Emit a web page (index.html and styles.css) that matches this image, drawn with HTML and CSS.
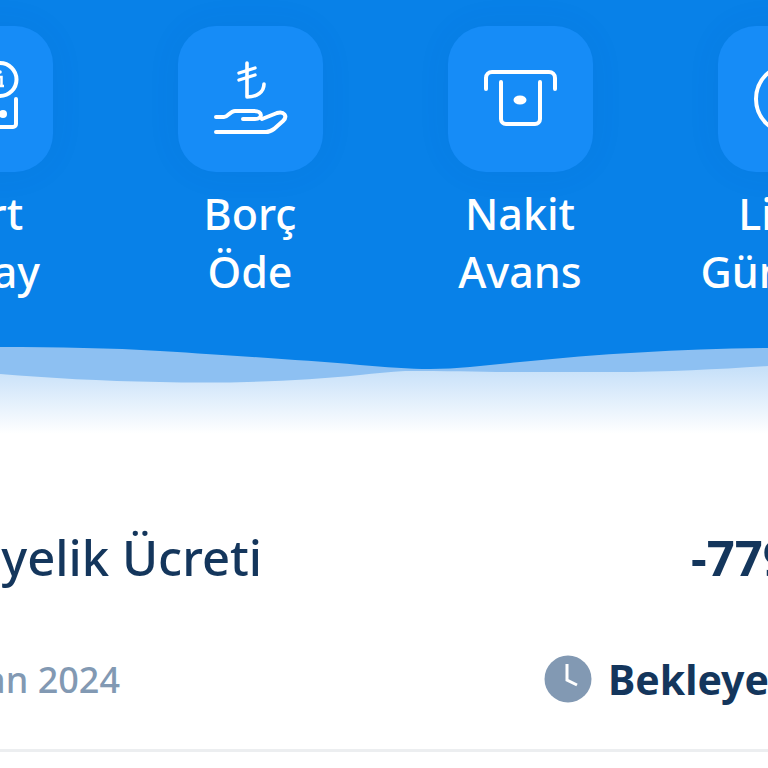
FILE: index.html
```html
<!DOCTYPE html>
<html lang="tr">
<head>
<meta charset="utf-8">
<title>Kart</title>
<link rel="stylesheet" href="styles.css">
</head>
<body>
<div class="screen">
  <section class="hero">
    <div class="actions">
      <div class="action">
        <div class="tile">
          <svg class="icon" viewBox="0 0 145 146"><g fill="none" stroke="#fff" stroke-width="4" stroke-linecap="round" stroke-linejoin="round"><circle cx="92" cy="53.500" r="16.500"/><path d="M108 73v25a3 3 0 0 1-3 3H79a3 3 0 0 1-3-3V73"/></g><circle cx="95" cy="88" r="4" fill="#fff"/><path d="M89 51h4.500v9H96M89 60h7" fill="none" stroke="#fff" stroke-width="2.500"/><circle cx="92" cy="46" r="1.800" fill="#fff"/></svg>
        </div>
        <div class="label">Kart<br>Detay</div>
      </div>
      <div class="action">
        <div class="tile">
          <svg class="icon" viewBox="0 0 145 146"><path d="M69 37V71C79 71 86 66 86 58" fill="none" stroke="#fff" stroke-width="3.600" stroke-linecap="round" stroke-linejoin="round"/><path d="M61 47l16-5M61 54l16-5" fill="none" stroke="#fff" stroke-width="3.400" stroke-linecap="round"/><path d="M38 91h8c4 0 6-6 11-6h19c9 0 9 8 1 8H65M84 93l15-6c7-2 11 3 6 8l-9 8c-3 2-5 3-8 3H38" fill="none" stroke="#fff" stroke-width="4" stroke-linecap="round" stroke-linejoin="round"/></svg>
        </div>
        <div class="label">Borç<br>Öde</div>
      </div>
      <div class="action">
        <div class="tile">
          <svg class="icon" viewBox="0 0 145 146"><path d="M38 63V52a6 6 0 0 1 6-6h57a6 6 0 0 1 6 6v11" fill="none" stroke="#fff" stroke-width="4" stroke-linecap="round"/><path d="M53 56v37a5 5 0 0 0 5 5h29a5 5 0 0 0 5-5V56" fill="none" stroke="#fff" stroke-width="4" stroke-linecap="round"/><ellipse cx="72" cy="74" rx="6.500" ry="4.500" fill="#fff"/></svg>
        </div>
        <div class="label">Nakit<br>Avans</div>
      </div>
      <div class="action">
        <div class="tile">
          <svg class="icon" viewBox="0 0 145 146"><circle cx="72" cy="73" r="34" fill="none" stroke="#fff" stroke-width="4"/></svg>
        </div>
        <div class="label">Limit<br>Güncelle</div>
      </div>
    </div>
  </section>
  <svg class="wave" viewBox="0 0 768 100">
    <defs>
      <linearGradient id="fade" gradientUnits="userSpaceOnUse" x1="0" y1="30" x2="0" y2="94">
        <stop offset="0" stop-color="#c8e1f9"/>
        <stop offset="1" stop-color="#ffffff"/>
      </linearGradient>
    </defs>
    <rect width="768" height="100" fill="url(#fade)"/>
    <path d="M0 0H768V26C720 29 670 32 612 32C580 32 550 32 520 32C480 32 450 31 405 31C390 32 375 33 360 35C300 41 230 44 160 42C100 41 50 38 0 34Z" fill="#8dc0f2"/>
    <path d="M0 0H768V8C680 9 600 14 520 22C490 25 460 29 430 29C410 29 385 27 360 25C300 20 240 16 160 11C110 8 60 7 0 7Z" fill="#0881e8"/>
  </svg>
  <section class="row">
    <div class="row-main">
      <div class="title">Üyelik Ücreti</div>
      <div class="amount">-779,00 ₺</div>
    </div>
    <div class="row-sub">
      <div class="date">15 Nisan 2024</div>
      <div class="status">
        <svg class="clock" viewBox="0 0 48 48"><circle cx="24" cy="24" r="23.500" fill="#8299b3"/><path d="M23 9v16l10 5" fill="none" stroke="#fff" stroke-width="3" stroke-linejoin="miter"/></svg>
        <span class="status-text">Bekleyen İşlem</span>
      </div>
    </div>
  </section>
</div>
</body>
</html>
```
FILE: styles.css
```css
* { box-sizing: border-box; }
html, body { margin: 0; padding: 0; background: #fff; }
body { font-family: "Noto Sans", sans-serif; }
.screen { width: 768px; height: 768px; overflow: hidden; display: flex; flex-direction: column; }
.hero { background: #0881e8; height: 340px; padding-top: 26px; flex: none; }
.actions { display: flex; margin-left: -155px; width: 1080px; }
.action { width: 270px; flex: none; display: flex; flex-direction: column; align-items: center; }
.tile { width: 145px; height: 146px; border-radius: 38px; background: #168cf7; box-shadow: 0 0 36px rgba(0, 70, 160, 0.06); }
.icon { display: block; width: 145px; height: 146px; }
.label { margin-top: 13px; color: #fff; font-size: 43px; font-weight: 500; line-height: 58px; text-align: center; white-space: nowrap; }
.wave { display: block; width: 768px; height: 100px; flex: none; }
.row { height: 312px; padding-top: 84px; border-bottom: 3px solid #eceef0; flex: none; }
.row-main { display: flex; align-items: baseline; height: 67px; }
.title { width: 262px; flex: none; display: flex; justify-content: flex-end; font-size: 49px; font-weight: 500; color: #14365c; white-space: nowrap; }
.amount { margin-left: 429px; font-size: 49px; font-weight: 700; color: #14365c; white-space: nowrap; }
.row-sub { display: flex; align-items: center; margin-top: 60px; }
.date { width: 120px; flex: none; display: flex; justify-content: flex-end; font-size: 36px; font-weight: 500; color: #8299b3; white-space: nowrap; }
.status { margin-left: 424px; display: flex; align-items: center; gap: 16px; flex: none; }
.clock { width: 48px; height: 48px; flex: none; }
.status-text { font-size: 41px; font-weight: 700; color: #14365c; white-space: nowrap; }
```
